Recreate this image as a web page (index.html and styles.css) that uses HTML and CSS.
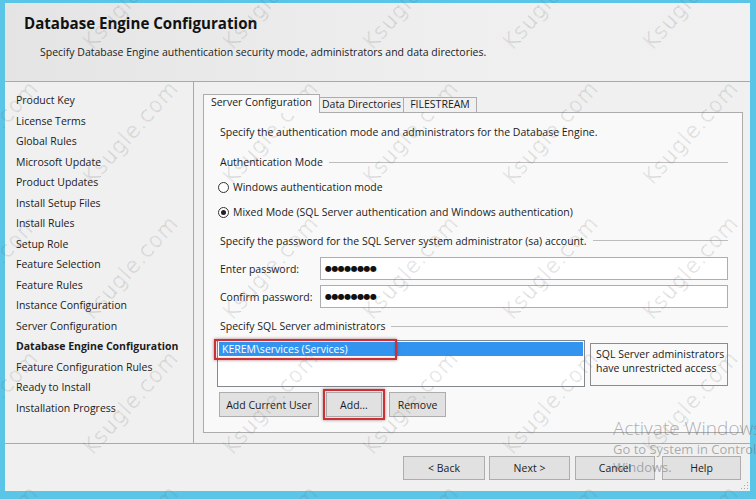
FILE: index.html
```html
<!DOCTYPE html>
<html>
<head>
<meta charset="utf-8">
<link rel="stylesheet" href="styles.css">
</head>
<body>
<div class="frame">
  <div class="dialog">
    <header class="head">
      <h1 class="title">Database Engine Configuration</h1>
      <p class="subtitle">Specify Database Engine authentication security mode, administrators and data directories.</p>
    </header>
    <div class="body">
      <nav class="steps">
        <ul class="step-list">
          <li>Product Key</li>
          <li>License Terms</li>
          <li>Global Rules</li>
          <li>Microsoft Update</li>
          <li>Product Updates</li>
          <li>Install Setup Files</li>
          <li>Install Rules</li>
          <li>Setup Role</li>
          <li>Feature Selection</li>
          <li>Feature Rules</li>
          <li>Instance Configuration</li>
          <li>Server Configuration</li>
          <li class="current">Database Engine Configuration</li>
          <li>Feature Configuration Rules</li>
          <li>Ready to Install</li>
          <li>Installation Progress</li>
        </ul>
      </nav>
      <main class="content">
        <div class="tabs">
          <div class="tab-strip">
            <span class="tab tab-server active">Server Configuration</span>
            <span class="tab tab-data">Data Directories</span>
            <span class="tab tab-fs">FILESTREAM</span>
          </div>
          <div class="panel">
            <div class="row intro">Specify the authentication mode and administrators for the Database Engine.</div>
            <div class="row group g-auth"><span>Authentication Mode</span><i class="rule"></i></div>
            <label class="row radio r-win"><span class="radio-dot"></span>Windows authentication mode</label>
            <label class="row radio r-mixed"><span class="radio-dot checked"></span>Mixed Mode (SQL Server authentication and Windows authentication)</label>
            <div class="row group g-pass"><span>Specify the password for the SQL Server system administrator (sa) account.</span><i class="rule"></i></div>
            <div class="row field f-enter"><span class="field-label">Enter password:</span><span class="input"><span class="dots">●●●●●●●●</span></span></div>
            <div class="row field f-confirm"><span class="field-label">Confirm password:</span><span class="input"><span class="dots">●●●●●●●●</span></span></div>
            <div class="row group g-admin"><span>Specify SQL Server administrators</span><i class="rule"></i></div>
            <div class="row admins">
              <div class="listbox">
                <div class="list-item selected">KEREM\services (Services)</div>
                <span class="mark mark-item"></span>
              </div>
              <div class="note">SQL Server administrators<br>have unrestricted access</div>
            </div>
            <div class="row actions">
              <button class="btn b-current">Add Current User</button>
              <span class="btn-wrap"><button class="btn b-add">Add...</button><span class="mark mark-add"></span></span>
              <button class="btn b-remove">Remove</button>
            </div>
          </div>
        </div>
      </main>
    </div>
    <footer class="foot">
      <button class="btn nav-btn back">&lt; Back</button>
      <button class="btn nav-btn next">Next &gt;</button>
      <button class="btn nav-btn cancel">Cancel</button>
      <button class="btn nav-btn help">Help</button>
      <span class="grip"></span>
    </footer>
  </div>
</div>
<div class="wm-clip" aria-hidden="true">
  <div class="watermarks">
    <span>Ksugle.com</span><span>Ksugle.com</span><span>Ksugle.com</span><span>Ksugle.com</span><span>Ksugle.com</span><span>Ksugle.com</span>
    <span>Ksugle.com</span><span>Ksugle.com</span><span>Ksugle.com</span><span>Ksugle.com</span><span>Ksugle.com</span><span>Ksugle.com</span>
    <span>Ksugle.com</span><span>Ksugle.com</span><span>Ksugle.com</span><span>Ksugle.com</span><span>Ksugle.com</span><span>Ksugle.com</span>
    <span>Ksugle.com</span><span>Ksugle.com</span><span>Ksugle.com</span><span>Ksugle.com</span><span>Ksugle.com</span><span>Ksugle.com</span>
    <span>Ksugle.com</span><span>Ksugle.com</span><span>Ksugle.com</span><span>Ksugle.com</span><span>Ksugle.com</span><span>Ksugle.com</span>
  </div>
</div>
<div class="activate">
  <div class="act-1">Activate Windows</div>
  <div class="act-2">Go to System in Control Panel to activate</div>
  <div class="act-3">Windows.</div>
</div>
</body>
</html>
```
FILE: styles.css
```css
html, body {
  margin: 0;
  padding: 0;
  width: 756px;
  height: 499px;
  overflow: hidden;
}
body {
  background: #5bc5e7;
  font-family: "Open Sans", "Noto Sans", "DejaVu Sans", sans-serif;
  font-size: 10.5px;
  color: #1b1b1b;
  position: relative;
}
.frame {
  box-sizing: border-box;
  height: 499px;
  padding: 3px 6px 8px 5px;
}
.dialog {
  height: 100%;
  background: #f0f0f0;
  display: flex;
  flex-direction: column;
}
.head {
  box-sizing: border-box;
  height: 79px;
  flex: none;
  border-bottom: 1px solid #a9a9a9;
  background: linear-gradient(to right, #e4e4e4, #efefef 60%, #f1f1f1);
  padding: 9px 0 0 19px;
}
.title {
  margin: 0;
  font-size: 15.1px;
  line-height: 22px;
  font-weight: bold;
  color: #111;
}
.subtitle {
  margin: 8px 0 0 16px;
  line-height: 20px;
  color: #222;
}
.body {
  box-sizing: border-box;
  height: 362px;
  flex: none;
  display: flex;
  border-bottom: 1px solid #a9a9a9;
}
.steps {
  width: 188px;
  flex: none;
  border-right: 1px solid #a9a9a9;
}
.step-list {
  list-style: none;
  margin: 0;
  padding: 8px 0 0 11px;
}
.step-list li {
  line-height: 20.53px;
  white-space: nowrap;
}
.step-list .current {
  font-weight: bold;
}
.content {
  flex: 1;
  padding: 11px 8px 10px 9px;
  display: flex;
  flex-direction: column;
}
.tabs {
  flex: 1;
  display: flex;
  flex-direction: column;
}
.tab-strip {
  display: flex;
  height: 19px;
  align-items: flex-end;
  position: relative;
  z-index: 1;
}
.tab {
  box-sizing: border-box;
  height: 15px;
  line-height: 13px;
  text-align: center;
  border: 1px solid #acacac;
  border-bottom: none;
  background: #f0f0f0;
  white-space: nowrap;
}
.tab-server { width: 117px; }
.tab-data { width: 85px; margin-left: -1px; }
.tab-fs { width: 74px; margin-left: -1px; }
.tab.active {
  height: 19px;
  line-height: 15px;
  background: #f9f9f9;
  margin-bottom: -1px;
}
.panel {
  flex: 1;
  border: 1px solid #acacac;
  background: #f9f9f9;
  padding: 9px 14px 0 16px;
  display: flex;
  flex-direction: column;
}
.row {
  display: flex;
  align-items: center;
  white-space: nowrap;
}
.intro { height: 20px; }
.group { height: 20px; }
.group .rule {
  flex: 1;
  height: 0;
  border-top: 1px solid #bdbdbd;
  margin-left: 6px;
}
.g-auth { margin-top: 10px; }
.radio { height: 20px; margin-top: 5px; }
.radio-dot {
  box-sizing: border-box;
  width: 11px;
  height: 11px;
  border: 1px solid #333;
  border-radius: 50%;
  background: #fff;
  margin: 0 4px 0 -2px;
  position: relative;
}
.radio-dot.checked::after {
  content: "";
  position: absolute;
  left: 2px;
  top: 2px;
  width: 5px;
  height: 5px;
  border-radius: 50%;
  background: #222;
}
.g-pass { margin-top: 9px; }
.g-pass .rule { margin-top: -2px; }
.field { height: 23px; margin-top: 5px; }
.f-enter { margin-top: 6px; }
.field-label { width: 100px; flex: none; }
.input {
  flex: 1;
  box-sizing: border-box;
  height: 23px;
  border: 1px solid #abadb3;
  background: #fff;
  display: flex;
  align-items: center;
  padding-left: 4px;
}
.dots {
  font-family: "DejaVu Sans", sans-serif;
  font-size: 8px;
  letter-spacing: -0.55px;
  color: #111;
}
.g-admin { margin-top: 8px; }
.admins {
  margin-top: 4px;
  height: 47px;
  align-items: flex-start;
  margin-left: -3px;
}
.listbox {
  box-sizing: border-box;
  width: 368px;
  height: 47px;
  border: 1px solid #828790;
  background: #fff;
  position: relative;
  padding: 1px;
}
.list-item {
  height: 14px;
  line-height: 14px;
  padding-left: 3px;
}
.list-item.selected {
  background: #3394ef;
  color: #fff;
}
.mark {
  position: absolute;
  border: 2px solid #cc2f36;
  box-shadow: 0 0 3px rgba(90, 0, 0, 0.5), inset 0 0 2px rgba(90, 0, 0, 0.35);
  pointer-events: none;
}
.mark-item {
  left: -4px;
  top: -2px;
  width: 179px;
  height: 17px;
}
.note {
  box-sizing: border-box;
  margin: 3px 0 0 5px;
  width: 138px;
  height: 43px;
  border: 1px solid #8c8c8c;
  padding: 3px 0 0 5px;
  line-height: 14px;
  white-space: nowrap;
}
.actions {
  margin-top: 5px;
  height: 25px;
  gap: 7px;
}
.btn {
  box-sizing: border-box;
  font: inherit;
  color: #1b1b1b;
  background: #e1e1e1;
  border: 1px solid #adadad;
  border-radius: 0;
  padding: 0;
  height: 25px;
  margin: 0;
}
.b-current { width: 100px; margin-left: -1px; }
.b-add { width: 56px; display: block; }
.b-remove { width: 57px; }
.btn-wrap { position: relative; display: block; }
.mark-add {
  left: -3px;
  top: -3px;
  width: 58px;
  height: 27px;
}
.foot {
  flex: 1;
  display: flex;
  align-items: flex-start;
  justify-content: flex-end;
  padding: 12px 9px 0 0;
  position: relative;
}
.nav-btn {
  height: 24px;
}
.back { width: 82px; }
.next { width: 81px; margin-left: 4px; }
.cancel { width: 80px; margin-left: 5px; }
.help { width: 79px; margin-left: 7px; }
.grip {
  position: absolute;
  right: 2px;
  bottom: 2px;
  width: 8px;
  height: 8px;
  background-image: radial-gradient(circle, #a8a8a8 0.8px, transparent 1px);
  background-size: 3px 3px;
  clip-path: polygon(100% 0, 100% 100%, 0 100%);
}
.wm-clip {
  position: absolute;
  left: 0;
  top: 0;
  width: 756px;
  height: 499px;
  overflow: hidden;
  pointer-events: none;
}
.watermarks {
  position: absolute;
  left: -80px;
  top: -70px;
  display: grid;
  grid-template-columns: repeat(6, 140px);
  grid-auto-rows: 135px;
}
.watermarks span {
  display: flex;
  align-items: center;
  justify-content: center;
  transform: rotate(-48deg);
  font-family: "DejaVu Sans", sans-serif;
  font-weight: 200;
  font-size: 21px;
  letter-spacing: 1px;
  color: transparent;
  -webkit-text-stroke: 0.45px rgba(110, 110, 110, 0.32);
  white-space: nowrap;
}
.activate {
  position: absolute;
  left: 613px;
  top: 416px;
  white-space: nowrap;
  color: rgba(110, 110, 110, 0.55);
  pointer-events: none;
}
.act-1 { font-size: 19px; line-height: 24px; font-weight: 300; }
.act-2 { font-size: 13px; line-height: 18px; }
.act-3 { font-size: 13px; line-height: 18px; }
```
